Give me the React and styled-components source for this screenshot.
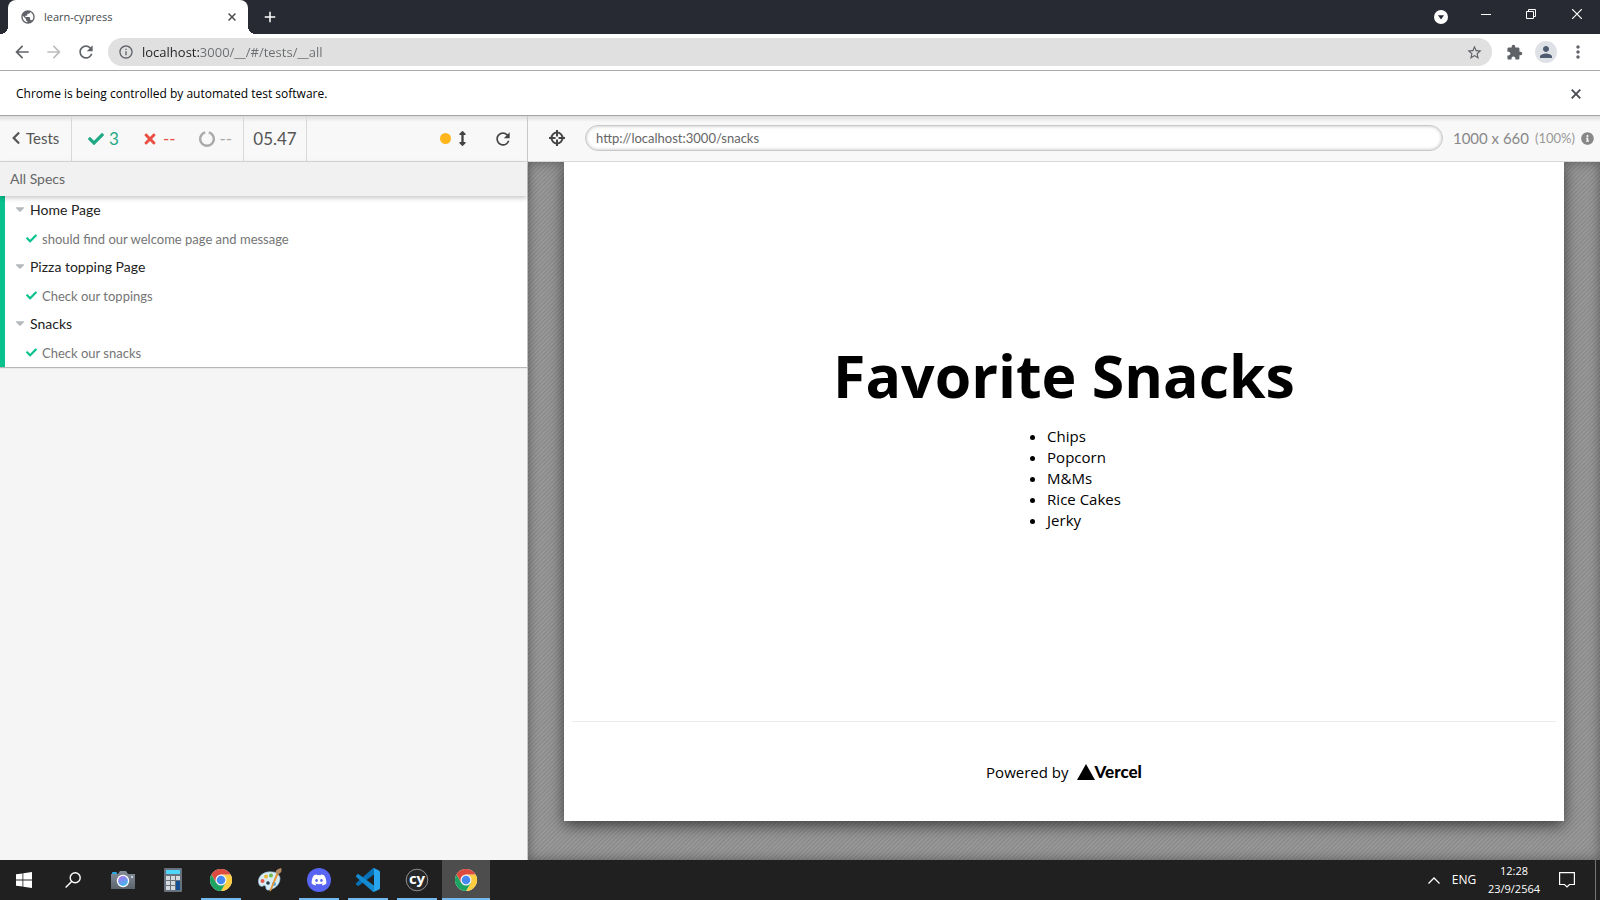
import React from "react";
import styled, { createGlobalStyle } from "styled-components";
import { FaCheck, FaTimes, FaArrowsAltV, FaChevronLeft, FaCaretDown, FaInfoCircle, FaDiscord } from "react-icons/fa";
import { MdPublic, MdAdd, MdArrowBack, MdArrowForward, MdRefresh, MdInfoOutline, MdStarBorder, MdExtension, MdPerson, MdMoreVert } from "react-icons/md";

const system = `"Open Sans", "Noto Sans", sans-serif`;
const runner = `Lato, "Open Sans", sans-serif`;

const GlobalStyle = createGlobalStyle`
  *, *::before, *::after { box-sizing: border-box; }
  body { margin: 0; font-family: ${system}; color: #000; }
  button { border: 0; padding: 0; background: none; color: inherit; font: inherit; }
  input { border: 0; padding: 0; font: inherit; min-width: 0; outline: none; }
  svg { display: block; flex: none; }
`;

const Screen = styled.div`
  min-height: 100vh;
  display: flex;
  flex-direction: column;
  background: #f5f5f5;
`;

const IconButton = styled.button`
  display: grid;
  place-items: center;
  flex: none;
  width: ${(p) => p.$w || 32}px;
  height: ${(p) => p.$h || 32}px;
  color: ${(p) => p.$color || "#5f6368"};
`;

/* browser chrome */
const TabStrip = styled.header`
  display: flex;
  height: 34px;
  padding-left: 8px;
  background: #282a33;
`;
const Tab = styled.div`
  position: relative;
  display: flex;
  align-items: center;
  gap: 8px;
  width: 240px;
  padding: 0 8px 0 12px;
  background: #fff;
  border-radius: 8px 8px 0 0;
  font-size: 11px;
  line-height: 16px;
  color: #45494d;
  &::before, &::after {
    content: "";
    position: absolute;
    bottom: 0;
    width: 8px;
    height: 8px;
  }
  &::before {
    right: 100%;
    background: radial-gradient(circle at 0 0, transparent 8px, #fff 8px);
  }
  &::after {
    left: 100%;
    background: radial-gradient(circle at 100% 0, transparent 8px, #fff 8px);
  }
`;
const TabTitle = styled.span`flex: 1;`;
const WindowControls = styled.div`
  display: flex;
  margin-left: auto;
`;
const Toolbar = styled.nav`
  display: flex;
  align-items: center;
  height: 37px;
  padding: 0 6px;
  background: #fff;
  border-bottom: 1px solid #a9a9a9;
`;
const Omnibox = styled.label`
  flex: 1;
  display: flex;
  align-items: center;
  gap: 8px;
  height: 28px;
  margin: 0 6px;
  padding: 0 9px 0 10px;
  border-radius: 14px;
  background: #e0e0e0;
  color: #5f6368;
`;
const Address = styled.input`
  flex: 1;
  height: 20px;
  font-size: 13px;
  line-height: 20px;
  color: transparent;
  background: linear-gradient(90deg, #202124 58px, #6a6d70 58px);
  background-clip: text;
`;
const Avatar = styled.span`
  display: grid;
  place-items: center;
  width: 22px;
  height: 22px;
  border-radius: 50%;
  background: #dee1e6;
  color: #4e5b70;
`;
const InfoBar = styled.aside`
  display: flex;
  align-items: center;
  justify-content: space-between;
  height: 45px;
  padding: 1px 8px 0 16px;
  background: #fff;
  border-bottom: 1px solid #a5a5a5;
  font-size: 12px;
  line-height: 20px;
`;

/* test runner */
const Runner = styled.div`
  flex: 1;
  display: grid;
  grid-template-columns: 33% 1fr;
  font-family: ${runner};
`;
const Column = styled.section`
  display: flex;
  flex-direction: column;
  min-width: 0;
`;
const Reporter = styled(Column)`border-right: 1px solid #c8c8c8;`;
const RunnerBar = styled.div`
  display: flex;
  align-items: stretch;
  height: 46px;
  background: linear-gradient(#dcdcdc, #f8f8f8 6px);
  border-bottom: 1px solid #d8d8d8;
  color: #555;
`;
const TestsButton = styled.button`
  display: flex;
  align-items: center;
  gap: 3px;
  width: 72px;
  padding: 0 0 2px 9px;
  border-right: 1px solid #d8d8d8;
  font-size: 15px;
`;
const Stats = styled.ul`
  display: flex;
  align-items: center;
  gap: 23px;
  width: 172px;
  margin: 0;
  padding: 0 0 0 16px;
  list-style: none;
  border-right: 1px solid #d8d8d8;
`;
const Stat = styled.li`
  display: flex;
  align-items: center;
  gap: 5px;
  font-size: 17px;
  line-height: 20px;
  color: ${(p) => p.$color};
`;
const Duration = styled.div`
  display: grid;
  place-items: center;
  width: 63px;
  font-size: 17px;
  border-right: 1px solid #d8d8d8;
`;
const Controls = styled.div`
  display: flex;
  align-items: center;
  gap: 9px;
  margin-left: auto;
  padding-right: 8px;
`;
const ScrollToggle = styled.button`
  display: flex;
  align-items: center;
  gap: 4px;
  padding: 8px;
`;
const Dot = styled.span`
  width: 11px;
  height: 11px;
  border-radius: 50%;
  background: #ffb61b;
`;
const SpecTitle = styled.h2`
  z-index: 1;
  margin: 0;
  padding: 0 10px;
  background: #f1f1f1;
  box-shadow: 0 2px 5px rgba(0, 0, 0, 0.22);
  font-size: 14px;
  line-height: 34px;
  font-weight: 400;
  color: #666;
`;
const Suites = styled.ul`
  margin: 0;
  padding: 0;
  list-style: none;
  background: #fff;
  border-left: 5px solid #08c18d;
  box-shadow: 0 1px 1px rgba(0, 0, 0, 0.25);
`;
const SuiteTitle = styled.button`
  display: flex;
  align-items: center;
  gap: 3px;
  height: 28px;
  padding: 0 0 2px 8px;
  font-size: 14px;
  color: #222;
  svg { color: #b4b9bd; }
`;
const Tests = styled.ul`
  margin: 0;
  padding: 0;
  list-style: none;
`;
const Test = styled.li`
  display: flex;
  align-items: center;
  gap: 5px;
  height: 29px;
  padding-left: 21px;
  font-size: 13px;
  color: #757575;
  svg { color: #08c18d; }
`;
const FrameBar = styled(RunnerBar)`
  align-items: center;
  padding: 0 6px 1px 13px;
`;
const UrlField = styled.input`
  flex: 1;
  height: 26px;
  margin: 0 10px 0 12px;
  padding: 0 10px;
  border: 1px solid #c8c8c8;
  border-radius: 13px;
  background: #fff;
  box-shadow: inset 0 0 3px 1px rgba(0, 0, 0, 0.16);
  font-size: 13px;
  color: #666;
`;
const Viewport = styled.div`
  display: flex;
  align-items: center;
  gap: 6px;
  font-size: 15px;
  color: #888;
`;
const Scale = styled.span`font-size: 13px; color: #999;`;
const Stage = styled.div`
  flex: 1;
  display: flex;
  padding: 0 36px 39px;
  box-shadow: inset 0 0 12px rgba(0, 0, 0, 0.4);
  background: repeating-linear-gradient(135deg, #888 0, #9d9d9d 2px, #888 3px);
`;

/* page under test */
const Frame = styled.article`
  flex: 1;
  display: flex;
  flex-direction: column;
  padding: 0 8px;
  background: #fff;
  box-shadow: 0 4px 14px rgba(0, 0, 0, 0.6);
  clip-path: inset(0 -30px -30px -30px);
  font-family: ${system};
`;
const Main = styled.main`
  flex: 1;
  display: flex;
  flex-direction: column;
  align-items: center;
  justify-content: center;
`;
const Title = styled.h1`
  margin: 0;
  padding-top: 2px;
  font-size: 59px;
  line-height: 74px;
  font-weight: 700;
`;
const Snacks = styled.ul`
  margin: 14px 0 16px;
  padding-left: 40px;
  font-size: 15px;
  line-height: 21px;
`;
const Footer = styled.footer`
  display: flex;
  align-items: center;
  justify-content: center;
  height: 100px;
  border-top: 1px solid #eaeaea;
`;
const FooterLink = styled.a`
  display: flex;
  align-items: center;
  gap: 8px;
  font-size: 15px;
  color: inherit;
  text-decoration: none;
`;
const Wordmark = styled.span`
  display: flex;
  align-items: center;
  font-family: Lato, sans-serif;
  font-size: 17px;
  line-height: 20px;
  font-weight: 900;
`;

/* Windows taskbar */
const Taskbar = styled.footer`
  display: flex;
  height: 40px;
  background: #202020;
  color: #fff;
`;
const TaskButton = styled.button`
  display: grid;
  place-items: center;
  width: ${(p) => p.$w || 49}px;
  background: ${(p) => (p.$active ? "#4d4d4d" : "none")};
  box-shadow: ${(p) => (p.$open ? "inset 0 -2px #76b9ed" : "none")};
  margin: 0 ${(p) => p.$gap || 0}px;
`;
const Tray = styled.div`
  display: flex;
  align-items: center;
  margin-left: auto;
  font-size: 12px;
  line-height: 18px;
`;
const Language = styled.button`width: 44px;`;
const Clock = styled.time`
  width: 56px;
  font-size: 11px;
  text-align: center;
`;
const ShowDesktop = styled.button`
  width: 5px;
  height: 40px;
  margin-left: 3px;
  border-left: 1px solid #777;
`;

const ChromeLogo = () => (
  <svg width="24" height="24" viewBox="0 0 48 48">
    <circle cx="24" cy="24" r="22" fill="#fff" />
    <path d="M24 13H43.1A22 22 0 0 1 24 46L33.5 29.5Z" fill="#ffcd40" />
    <path d="M14.5 29.5 4.9 13A22 22 0 0 0 24 46L33.5 29.5Z" fill="#1da462" />
    <path d="M24 13H43.1A22 22 0 0 0 4.9 13L14.5 29.5Z" fill="#dd4b3e" />
    <circle cx="24" cy="24" r="11" fill="#f4f4f4" />
    <circle cx="24" cy="24" r="8.5" fill="#4688f1" />
  </svg>
);
const WindowsLogo = () => (
  <svg width="16" height="16" viewBox="0 0 16 16" fill="#fff">
    <path d="M0 2.3 6.5 1.4V7.5H0ZM7.3 1.3 16 0V7.5H7.3ZM0 8.4H6.5V14.6L0 13.7ZM7.3 8.4H16V16L7.3 14.7Z" />
  </svg>
);
const SearchIcon = () => (
  <svg width="16" height="16" viewBox="0 0 16 16" fill="none" stroke="#fff" strokeWidth="1.4">
    <circle cx="10.2" cy="5.8" r="5" /><path d="M6.6 9.4.6 15.4" />
  </svg>
);
const CameraIcon = () => (
  <svg width="24" height="20" viewBox="0 0 24 20">
    <defs>
      <linearGradient id="lens" x1="0" y1="0" x2=".5" y2="1"><stop stopColor="#b76af0" /><stop offset="1" stopColor="#42b5ee" /></linearGradient>
      <linearGradient id="body" x1="0" y1="0" x2="0" y2="1"><stop stopColor="#87909a" /><stop offset="1" stopColor="#5b646d" /></linearGradient>
    </defs>
    <rect x="1" y="2" width="5" height="3" rx="1" fill="#2ba8e0" />
    <path d="M0 4H7L9 1H15L17 4H24V19H0Z" fill="url(#body)" />
    <rect x="20" y="6" width="2" height="2" fill="#c7d1d9" />
    <circle cx="12" cy="11" r="6.2" fill="#fff" /><circle cx="12" cy="11" r="4.9" fill="url(#lens)" />
  </svg>
);
const CalculatorIcon = () => (
  <svg width="18" height="24" viewBox="0 0 18 24">
    <rect width="18" height="24" rx="1" fill="#68727c" />
    <rect x="2" y="2" width="14" height="4" fill="#4fd5fb" />
    {[8, 13, 18].map((y) => [2, 7, 12].map((x) => (
      <rect key={`${x}-${y}`} x={x} y={y} width="4" height="4" fill="#d5dade" />
    )))}
    <rect x="12" y="13" width="4" height="9" fill="#124f94" />
  </svg>
);
const PaintIcon = () => (
  <svg width="24" height="24" viewBox="0 0 24 24">
    <path d="M14 4C6 3 0 8 .5 14 1 18 3 19 5 18S8 18 8 20 10 23 14 21C19 19 22 15 22 10 21 6 18 4 14 4Z" fill="#d8ecf6" stroke="#9ac5dc" strokeWidth=".7" />
    <circle cx="4.5" cy="13" r="2" fill="#e4574b" /><circle cx="8" cy="8.5" r="2" fill="#ecb43a" />
    <circle cx="13" cy="7.5" r="2" fill="#70b94c" /><circle cx="10" cy="15" r="1.8" fill="#263a4b" /><circle cx="16" cy="16" r="2" fill="#54a6dd" />
    <path d="M18.5 5 20.5 6 13 23 11.5 23.5 12 21.5Z" fill="#e49335" />
    <path d="M18 5C17 3 19 1 23 0 24 2 24 4 21 6Z" fill="#b78c63" />
  </svg>
);
const DiscordLogo = () => (
  <svg width="24" height="24" viewBox="0 0 24 24">
    <circle cx="12" cy="12" r="12" fill="#5865f2" />
    <FaDiscord x="4" y="4" size="16" color="#fff" />
  </svg>
);
const CodeLogo = () => (
  <svg width="24" height="24" viewBox="0 0 100 100">
    <path d="M75 27 11.5 74C10 75 8 75 6.5 74L1 69C-.5 67-.5 65 1 63L69 2C71 .5 73.5 0 76 1L75 27Z" fill="#0872b9" />
    <path d="M75 73 11.5 26C10 25 8 25 6.5 26L1 31C-.5 33-.5 35 1 37L69 98C71 99.5 73.5 100 76 99Z" fill="#148ad1" />
    <path d="M76 99C74 100 71 99.5 69 98 71 100 75 98.5 75 95V5C75 1.5 71 0 69 2 71 .5 74 0 76 1L96 10.5C98.5 12 100 14 100 17V83C100 86 98.5 88 96 89.5Z" fill="#27a5ef" />
  </svg>
);
const CypressLogo = () => (
  <svg width="24" height="24" viewBox="0 0 24 24">
    <circle cx="12" cy="12" r="10.8" fill="#262729" stroke="#aaa" strokeWidth=".8" />
    <text x="12" y="16" textAnchor="middle" fontFamily="Open Sans, sans-serif" fontSize="15" fontWeight="700" fill="#fff">cy</text>
  </svg>
);
const Crosshair = () => (
  <svg width="16" height="16" viewBox="0 0 16 16" fill="none" stroke="#444" strokeWidth="2">
    <circle cx="8" cy="8" r="5.5" /><path d="M8 0V6.5M8 9.5V16M0 8H6.5M9.5 8H16" />
  </svg>
);
const Notch = () => (
  <svg width="16" height="16" viewBox="0 0 16 16" fill="none" stroke="#aaa" strokeWidth="2.4">
    <path d="M9.8 1.4A6.8 6.8 0 1 1 6.2 1.4" />
  </svg>
);
const Cross = ({ size }) => (
  <svg width={size} height={size} viewBox="0 0 10 10" stroke="#4a4d51" strokeWidth="1.9">
    <path d="M.7.7 9.3 9.3M9.3.7.7 9.3" />
  </svg>
);

const suites = [
  ["Home Page", ["should find our welcome page and message"]],
  ["Pizza topping Page", ["Check our toppings"]],
  ["Snacks", ["Check our snacks"]],
];
const snacks = ["Chips", "Popcorn", "M&Ms", "Rice Cakes", "Jerky"];

export default function App() {
  return (
    <Screen>
      <GlobalStyle />
      <TabStrip>
        <Tab>
          <MdPublic size={16} color="#5f6368" />
          <TabTitle>learn-cypress</TabTitle>
          <IconButton $w={16} $h={16} aria-label="Close tab"><Cross size={8} /></IconButton>
        </Tab>
        <IconButton $w={44} $h={34} $color="#fff" aria-label="New tab"><MdAdd size={18} /></IconButton>
        <WindowControls>
          <IconButton $w={44} $h={34} aria-label="Search tabs">
            <svg width="14" height="14" viewBox="0 0 14 14"><circle cx="7" cy="7" r="7" fill="#fff" /><path d="M4 5.2H10L7 9.5Z" fill="#282a33" /></svg>
          </IconButton>
          <IconButton $w={45} $h={28} aria-label="Minimize">
            <svg width="10" height="10" viewBox="0 0 10 10"><path d="M0 5.5H10" stroke="#fff" /></svg>
          </IconButton>
          <IconButton $w={46} $h={28} aria-label="Restore">
            <svg width="10" height="10" viewBox="0 0 10 10" fill="none" stroke="#fff"><path d="M.5 2.5H7.5V9.5H.5ZM2.5 2.5V.5H9.5V7.5H7.5" /></svg>
          </IconButton>
          <IconButton $w={46} $h={28} aria-label="Close">
            <svg width="10" height="10" viewBox="0 0 10 10" stroke="#fff" strokeWidth="1.2"><path d="M0 0 10 10M10 0 0 10" /></svg>
          </IconButton>
        </WindowControls>
      </TabStrip>
      <Toolbar>
        <IconButton aria-label="Back"><MdArrowBack size={20} /></IconButton>
        <IconButton $color="#bbbdbf" aria-label="Forward"><MdArrowForward size={20} /></IconButton>
        <IconButton aria-label="Reload"><MdRefresh size={20} /></IconButton>
        <Omnibox>
          <MdInfoOutline size={16} />
          <Address aria-label="Address" defaultValue="localhost:3000/__/#/tests/__all" />
          <MdStarBorder size={17} />
        </Omnibox>
        <IconButton aria-label="Extensions"><MdExtension size={17} /></IconButton>
        <IconButton aria-label="Profile"><Avatar><MdPerson size={18} /></Avatar></IconButton>
        <IconButton aria-label="Menu"><MdMoreVert size={20} /></IconButton>
      </Toolbar>
      <InfoBar>
        Chrome is being controlled by automated test software.
        <IconButton aria-label="Dismiss"><Cross size={10} /></IconButton>
      </InfoBar>

      <Runner>
        <Reporter>
          <RunnerBar>
            <TestsButton><FaChevronLeft size={14} />Tests</TestsButton>
            <Stats>
              <Stat $color="#1fa884"><FaCheck size={16} />3</Stat>
              <Stat $color="#e94f42"><FaTimes size={16} />--</Stat>
              <Stat $color="#aaa"><Notch />--</Stat>
            </Stats>
            <Duration>05.47</Duration>
            <Controls>
              <ScrollToggle aria-label="Auto-scrolling"><Dot /><FaArrowsAltV size={15} color="#444" /></ScrollToggle>
              <IconButton $color="#444" aria-label="Run all tests"><MdRefresh size={20} /></IconButton>
            </Controls>
          </RunnerBar>
          <SpecTitle>All Specs</SpecTitle>
          <Suites>
            {suites.map(([name, tests]) => (
              <li key={name}>
                <SuiteTitle><FaCaretDown size={14} />{name}</SuiteTitle>
                <Tests>{tests.map((t) => <Test key={t}><FaCheck size={11} />{t}</Test>)}</Tests>
              </li>
            ))}
          </Suites>
        </Reporter>
        <Column>
          <FrameBar>
            <IconButton aria-label="Selector playground"><Crosshair /></IconButton>
            <UrlField aria-label="Page URL" readOnly value="http://localhost:3000/snacks" />
            <Viewport>1000 x 660 <Scale>(100%)</Scale><FaInfoCircle size={13} /></Viewport>
          </FrameBar>
          <Stage>
            <Frame>
              <Main>
                <Title>Favorite Snacks</Title>
                <Snacks>{snacks.map((s) => <li key={s}>{s}</li>)}</Snacks>
              </Main>
              <Footer>
                <FooterLink href="#vercel">
                  Powered by
                  <Wordmark><svg width="18" height="16" viewBox="0 0 18 16"><path d="M9 0 18 16H0Z" /></svg>Vercel</Wordmark>
                </FooterLink>
              </Footer>
            </Frame>
          </Stage>
        </Column>
      </Runner>

      <Taskbar>
        <TaskButton $w={48} aria-label="Start"><WindowsLogo /></TaskButton>
        <TaskButton $w={49} aria-label="Search"><SearchIcon /></TaskButton>
        <TaskButton $w={52} aria-label="Camera"><CameraIcon /></TaskButton>
        <TaskButton $w={48} aria-label="Calculator"><CalculatorIcon /></TaskButton>
        <TaskButton $w={40} $gap={4} $open aria-label="Chrome"><ChromeLogo /></TaskButton>
        <TaskButton aria-label="Paint"><PaintIcon /></TaskButton>
        <TaskButton $w={40} $gap={5} $open aria-label="Discord"><DiscordLogo /></TaskButton>
        <TaskButton $w={40} $gap={4} $open aria-label="Visual Studio Code"><CodeLogo /></TaskButton>
        <TaskButton $w={40} $gap={5} $open aria-label="Cypress"><CypressLogo /></TaskButton>
        <TaskButton $w={48} $open $active aria-label="Chrome, test window"><ChromeLogo /></TaskButton>
        <Tray>
          <IconButton $w={16} aria-label="Hidden icons">
            <svg width="12" height="7" viewBox="0 0 12 7" fill="none" stroke="#fff" strokeWidth="1.3"><path d="M.5 6.5 6 1 11.5 6.5" /></svg>
          </IconButton>
          <Language>ENG</Language>
          <Clock>12:28<br />23/9/2564</Clock>
          <IconButton $w={50} aria-label="Notifications">
            <svg width="16" height="16" viewBox="0 0 16 16" fill="none" stroke="#fff" strokeWidth="1.2"><path d="M.6.6H15.4V12.5H10.5L8 15 5.5 12.5H.6Z" /></svg>
          </IconButton>
          <ShowDesktop aria-label="Show desktop" />
        </Tray>
      </Taskbar>
    </Screen>
  );
}
